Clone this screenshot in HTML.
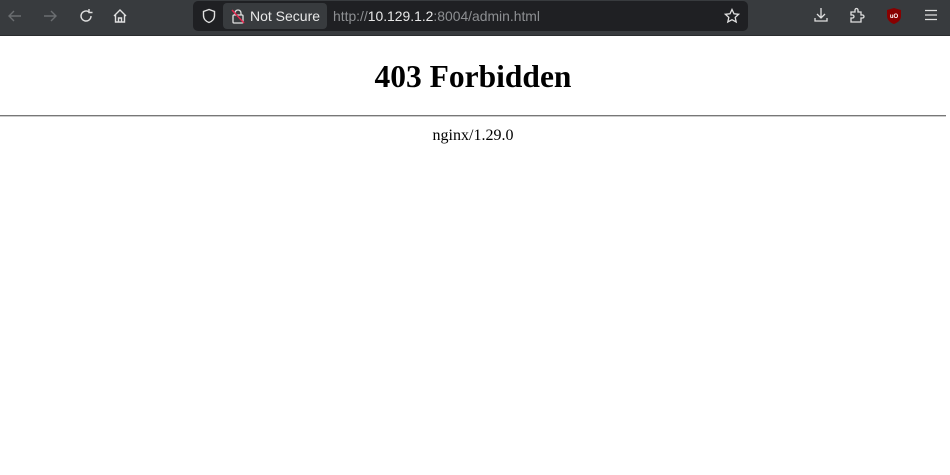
<!DOCTYPE html>
<html><head><style>
body{margin:0;width:950px;height:475px;background:#fff;overflow:hidden;font-family:"Liberation Serif",serif}
.tb{position:absolute;left:0;top:0;width:950px;height:36px;background:#383b3e;border-bottom:1px solid #2a2c2e;box-sizing:border-box}
.url{position:absolute;left:193px;top:1px;width:555px;height:30px;background:#1f2023;border-radius:5px}
.ns{position:absolute;left:223px;top:3px;width:104px;height:26px;background:#383b3e;border-radius:4px}
.t{position:absolute;font-family:"Liberation Sans",sans-serif;font-size:14px;top:8px}
svg{position:absolute}
h1{position:absolute;top:58px;left:0;width:946px;margin:0;text-align:center;font-size:31.5px;font-weight:bold;line-height:37px}
hr{position:absolute;top:115px;left:0;width:946px;margin:0;border:0;border-top:1px solid #777;border-bottom:1px solid #ccc;height:0}
.ng{position:absolute;top:127px;left:0;width:946px;text-align:center;font-size:16px}
</style></head><body>
<div class="tb">
<svg style="left:7px;top:8px" width="16" height="16" viewBox="0 0 16 16" fill="none" stroke="#6b6e71" stroke-width="1.4"><path d="M14 8H2M7 3L2 8l5 5"/></svg>
<svg style="left:42px;top:8px" width="16" height="16" viewBox="0 0 16 16" fill="none" stroke="#6b6e71" stroke-width="1.4"><path d="M2 8h12M9 3l5 5-5 5"/></svg>
<svg style="left:78px;top:8px" width="16" height="16" viewBox="0 0 16 16" fill="none" stroke="#e0e0e0" stroke-width="1.4"><path d="M13 8a5 5 0 1 1-2-4M11 1v3.5h3.5"/></svg>
<svg style="left:112px;top:8px" width="16" height="16" viewBox="0 0 16 16" fill="none" stroke="#e0e0e0" stroke-width="1.4"><path d="M2 8L8 2l6 6M3.5 7v7h9V7M6.5 14v-4h3v4"/></svg>
<div class="url"></div>
<svg style="left:201px;top:8px" width="16" height="16" viewBox="0 0 16 16" fill="none" stroke="#e0e0e0" stroke-width="1.4"><path d="M8 1.5L2.5 3.5v4c0 3.5 2.5 6 5.5 7 3-1 5.5-3.5 5.5-7v-4z"/></svg>
<div class="ns"></div>
<svg style="left:230px;top:8px" width="16" height="16" viewBox="0 0 16 16" fill="none" stroke="#e0e0e0" stroke-width="1.3"><rect x="3" y="7" width="10" height="8" rx="1"/><path d="M5 7V5a3 3 0 0 1 6 0v2"/><path d="M2 2l12 13" stroke="#e22850" stroke-width="1.5"/></svg>
<div class="t" style="left:250px;color:#e8e8e8">Not Secure</div>
<div class="t" style="left:333px;color:#8d8f92;font-size:13.9px">http://<span style="color:#e8e8e8">10.129.1.2</span>:8004/admin.html</div>
<svg style="left:724px;top:8px" width="16" height="16" viewBox="0 0 16 16" fill="none" stroke="#e0e0e0" stroke-width="1.3"><path d="M8 1.5l2 4.3 4.6.5-3.4 3.1 1 4.6L8 11.7 3.8 14l1-4.6L1.4 6.3 6 5.8z"/></svg>
<svg style="left:813px;top:7px" width="16" height="16" viewBox="0 0 16 16" fill="none" stroke="#e0e0e0" stroke-width="1.3"><path d="M8 1v10M4 7l4 4 4-4M2 11v3h12v-3"/></svg>
<svg style="left:849px;top:7px" width="16" height="16" viewBox="0 0 16 16" fill="none" stroke="#e0e0e0" stroke-width="1.3"><path d="M2 5h4V3a1.5 1.5 0 0 1 3 0v2h3v3h1.5a1.5 1.5 0 0 1 0 3H12v4H2v-4h1.5a1.5 1.5 0 0 0 0-3H2z"/></svg>
<svg style="left:886px;top:7px" width="16" height="18" viewBox="0 0 16 18"><path d="M8 1L1 3v6c0 4 3 6.5 7 8 4-1.5 7-4 7-8V3z" fill="#800"/><text x="8" y="11" font-size="6" fill="#fff" text-anchor="middle" font-family="Liberation Sans" font-weight="bold">uO</text></svg>
<svg style="left:924px;top:8px" width="14" height="14" viewBox="0 0 14 14" stroke="#e0e0e0" stroke-width="1.3"><path d="M1 2.5h12M1 7h12M1 11.5h12"/></svg>
</div>
<h1>403 Forbidden</h1>
<hr>
<div class="ng">nginx/1.29.0</div>
</body></html>
